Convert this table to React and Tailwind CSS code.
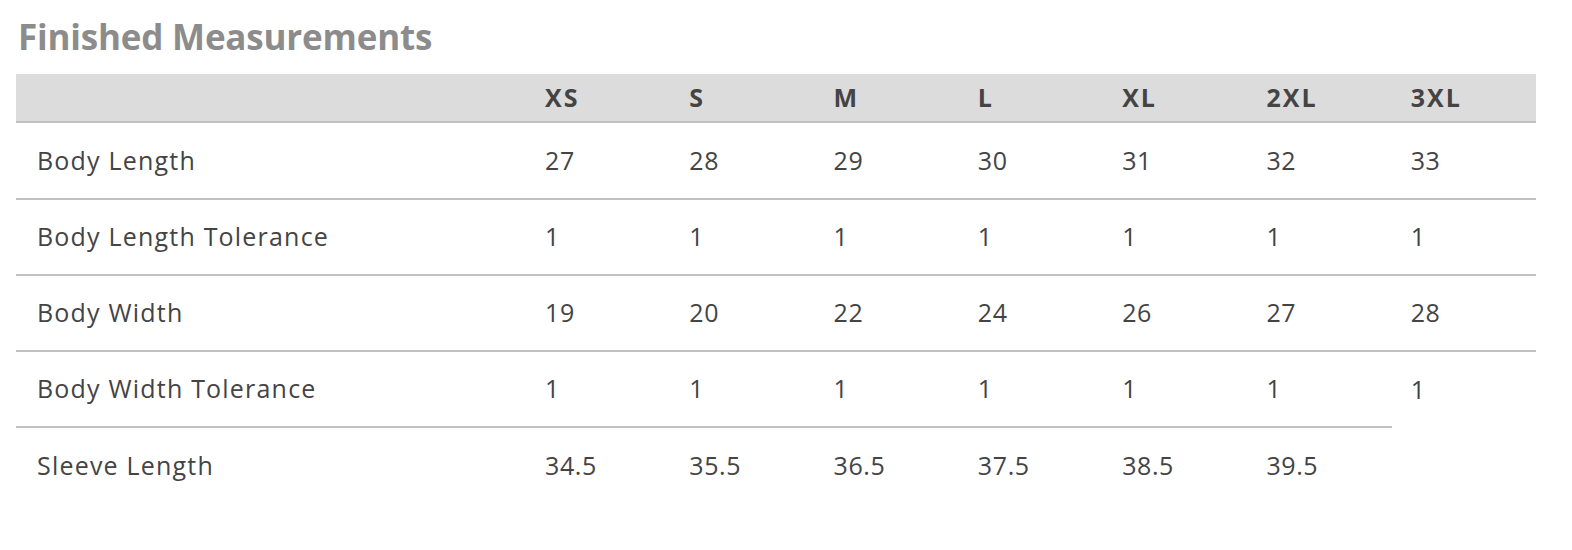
import React from 'react'

const SIZES = ['XS', 'S', 'M', 'L', 'XL', '2XL', '3XL']

const ROWS = [
  { label: 'Body Length', values: ['27', '28', '29', '30', '31', '32', '33'] },
  { label: 'Body Length Tolerance', values: ['1', '1', '1', '1', '1', '1', '1'] },
  { label: 'Body Width', values: ['19', '20', '22', '24', '26', '27', '28'] },
  { label: 'Body Width Tolerance', values: ['1', '1', '1', '1', '1', '1', '1'] },
  { label: 'Sleeve Length', values: ['34.5', '35.5', '36.5', '37.5', '38.5', '39.5'] },
]

export default function App() {
  return (
    <div className="bg-white min-h-[550px] px-4 pt-[15px] font-['Open_Sans',sans-serif] text-[#444444]">
      <h2 className="text-[35px] leading-[43px] font-bold text-[#8c8c8c] pl-[2px] mb-[16px] tracking-[-0.2px]">
        Finished Measurements
      </h2>
      <table className="w-[1520px] table-fixed border-collapse">
        <colgroup>
          <col className="w-[510px]" />
          {SIZES.map(s => <col key={s} />)}
        </colgroup>
        <thead>
          <tr className="bg-[#dcdcdc] border-b-2 border-[#c1c1c1]">
            <th className="h-[48px]" />
            {SIZES.map(s => (
              <th key={s} className="h-[48px] text-left pl-[19px] text-[25px] tracking-[2px] font-bold text-[#444444]">{s}</th>
            ))}
          </tr>
        </thead>
        <tbody>
          {ROWS.map((r, i) => (
            <tr key={r.label}>
              <td className={`pl-[21px] text-[25px] tracking-[1.2px] ${i > 0 ? 'h-[76px] border-t-2 border-[#c1c1c1]' : 'h-[77px]'}`}>{r.label}</td>
              {r.values.map((v, j) => (
                <td key={j} className={`pl-[19px] text-[25px] tracking-[0.6px] ${i > 0 ? 'h-[76px] border-t-2 border-[#c1c1c1]' : 'h-[77px]'}`}>{v}</td>
              ))}
            </tr>
          ))}
        </tbody>
      </table>
    </div>
  )
}
